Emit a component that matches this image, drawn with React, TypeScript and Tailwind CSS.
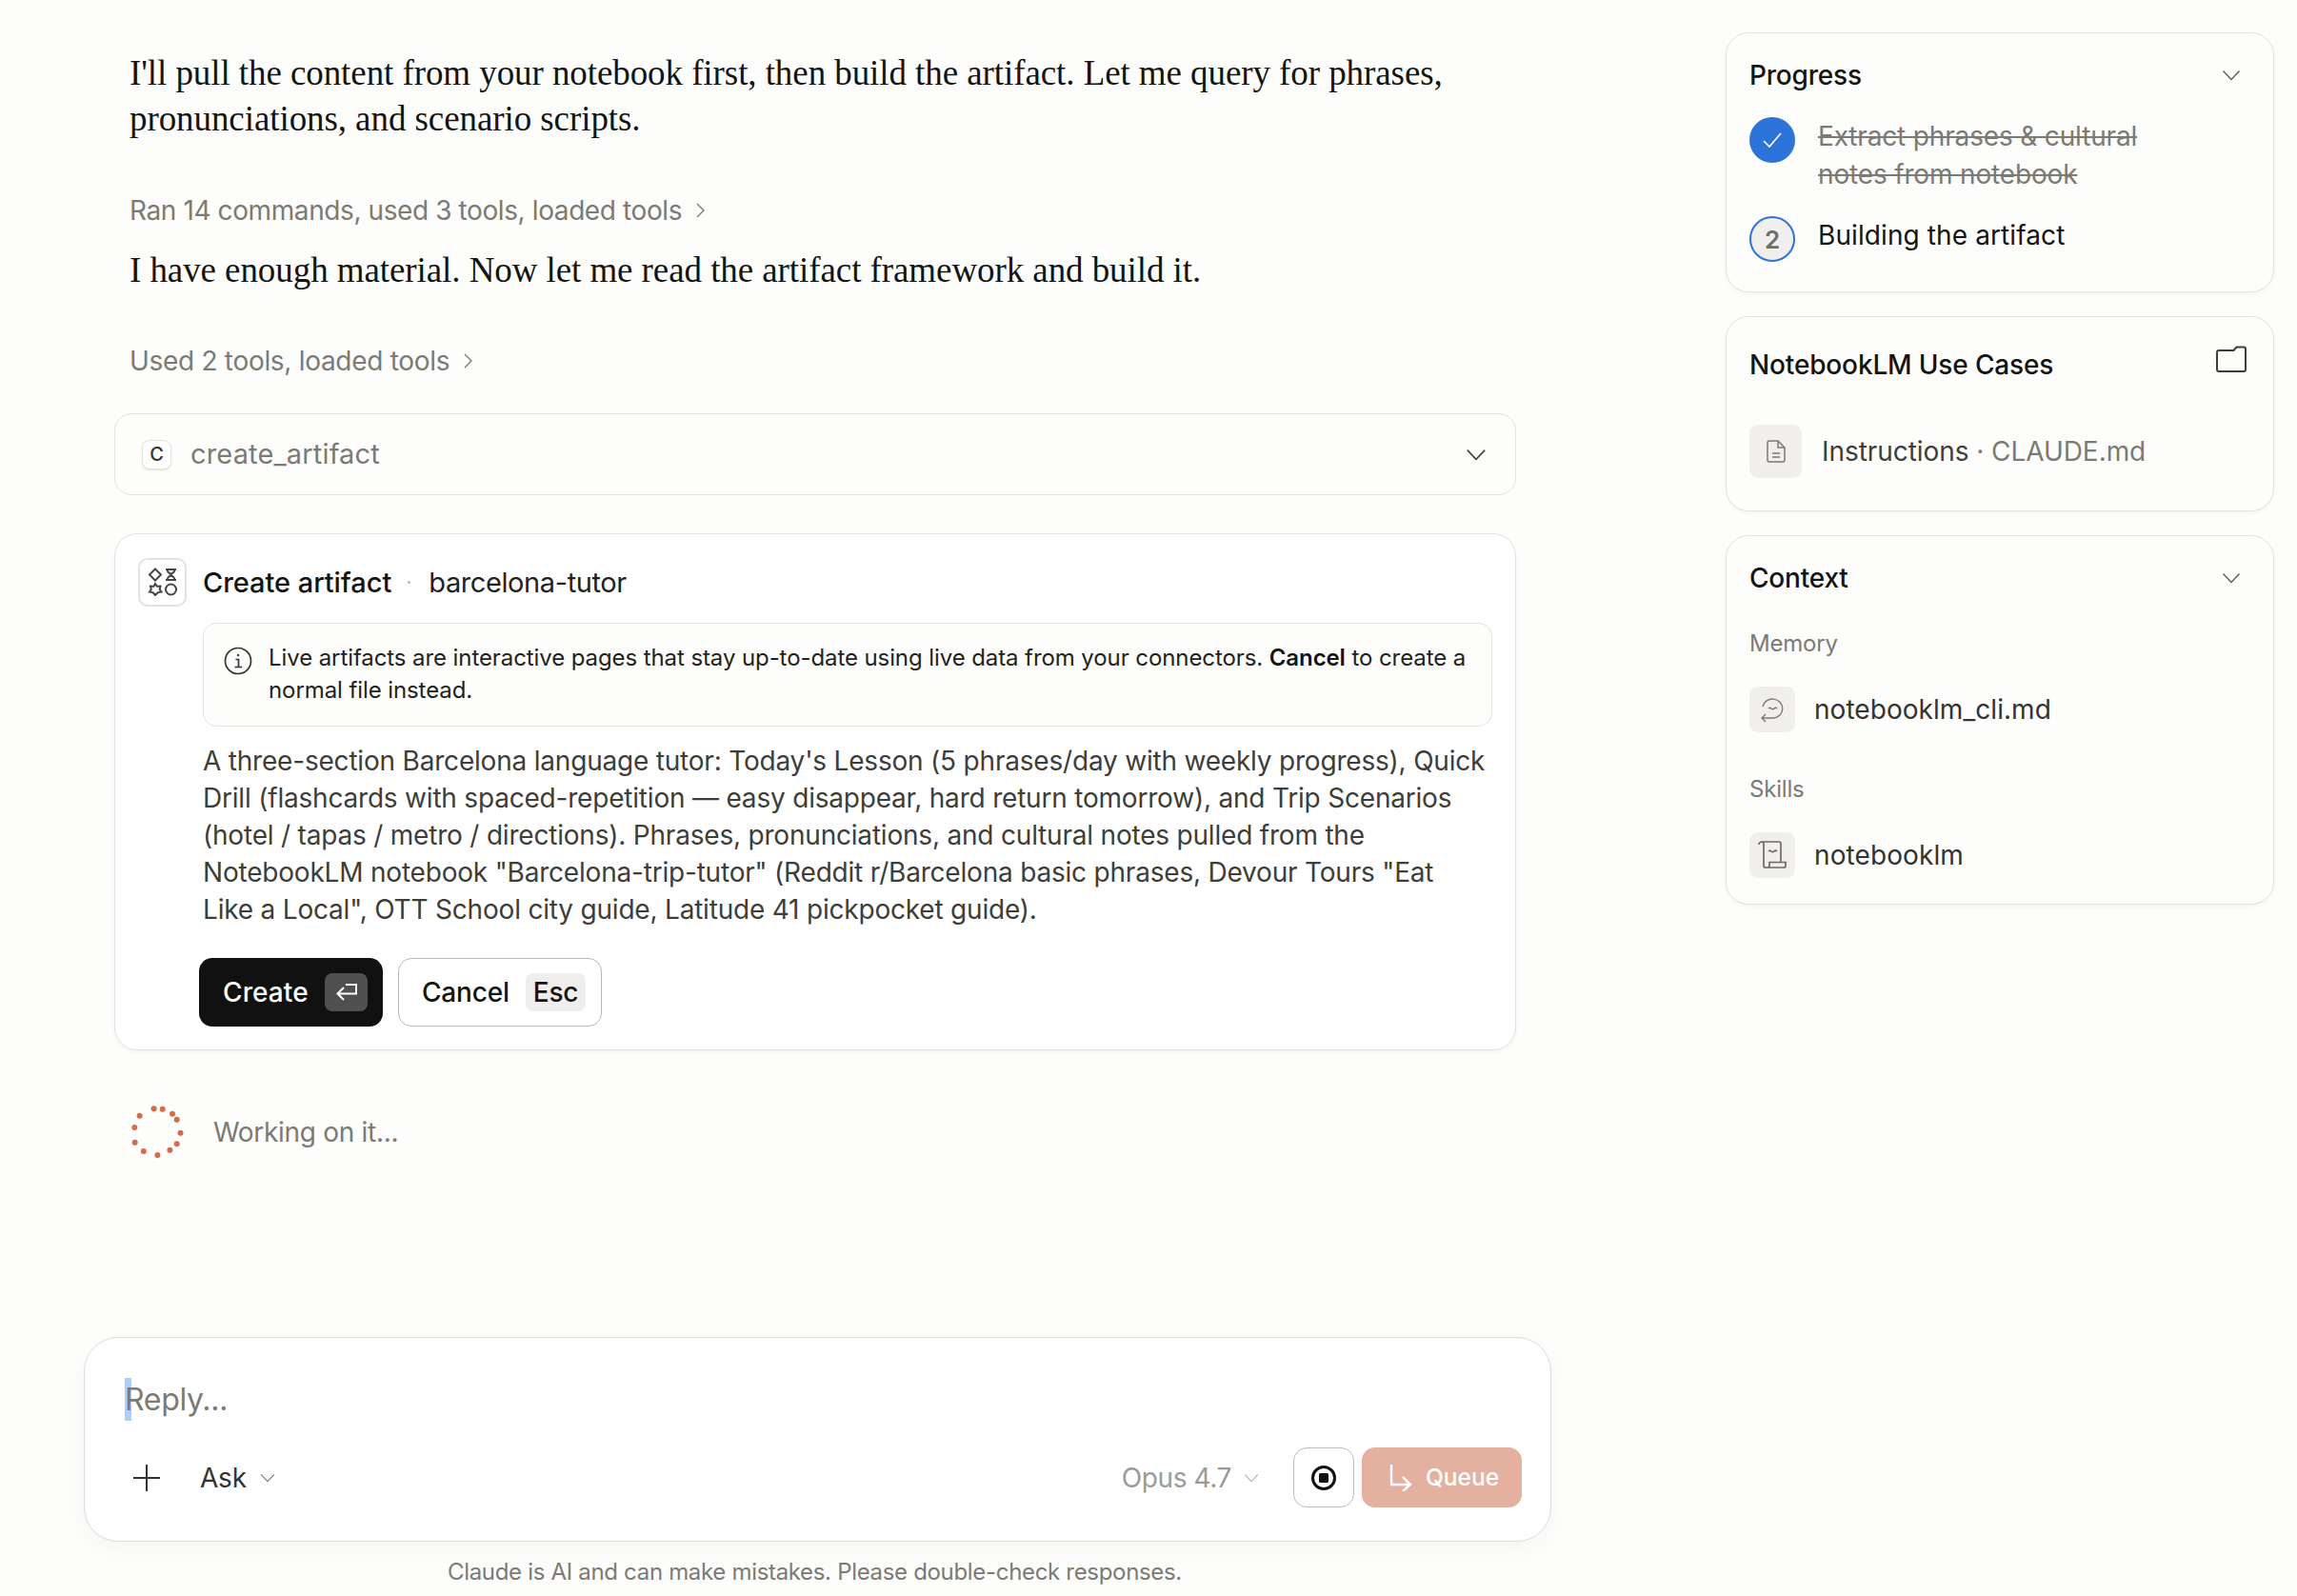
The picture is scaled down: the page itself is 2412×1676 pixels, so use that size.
import React from "react";

const sans = "[font-family:Inter,'Liberation_Sans',sans-serif]";

function Chevron({ className = "" }: { className?: string }) {
  return (
    <svg viewBox="0 0 20 12" fill="none" stroke="currentColor" strokeWidth="1.4" className={className}>
      <path d="M1.5 1.5 10 10.5l8.5-9" />
    </svg>
  );
}

function Spinner() {
  const dots = [
    [-3.4, -24.7], [5.7, -24.3], [16, -19.3], [20.7, -13.3], [24.5, 0.7], [20.7, 12.3],
    [13.4, 18.7], [0.4, 24], [-14.2, 20], [-23.3, 10.7], [-23.7, -5], [-18.4, -17.3],
  ];
  return (
    <svg width="60" height="60" viewBox="-30 -30 60 60" className="shrink-0">
      {dots.map(([x, y], i) => (
        <circle key={i} cx={x} cy={y} r="3" fill="#d9694a" />
      ))}
    </svg>
  );
}

function Tile({ children, size }: { children: React.ReactNode; size: string }) {
  return <div className={`${size} rounded-[9px] bg-[#f0efee] flex items-center justify-center shrink-0`}>{children}</div>;
}

function Card({ children, className = "" }: { children: React.ReactNode; className?: string }) {
  return (
    <div className={`rounded-[24px] border border-[#e3e2df] bg-[#fdfdfb] shadow-[0_2px_4px_rgba(0,0,0,0.04)] ${className}`}>
      {children}
    </div>
  );
}

export default function App() {
  return (
    <div className={`${sans} w-[2412px] h-[1676px] bg-[#fdfdfb] overflow-hidden flex text-[#141413]`}>
      <div className="w-[1812px] shrink-0 flex flex-col">
        <div className="pl-[136px] pt-[53px] text-[37px] leading-[48px] tracking-[-0.08px] text-[#141413] [font-family:'Liberation_Serif',serif] whitespace-nowrap">
          I'll pull the content from your notebook first, then build the artifact. Let me query for phrases,
          <br />
          pronunciations, and scenario scripts.
        </div>

        <div className="pl-[136px] mt-[52px] flex items-center gap-[14px] text-[28px] leading-[40px] text-[#7b7a75] tracking-[-0.4px]">
          Ran 14 commands, used 3 tools, loaded tools
          <svg width="12" height="18" viewBox="0 0 12 18" fill="none" stroke="#7b7a75" strokeWidth="1.4"><path d="M2 2l7 7-7 7" /></svg>
        </div>

        <div className="pl-[136px] mt-[19px] text-[37px] leading-[48px] tracking-[-0.08px] [font-family:'Liberation_Serif',serif] whitespace-nowrap">
          I have enough material. Now let me read the artifact framework and build it.
        </div>

        <div className="pl-[136px] mt-[51px] flex items-center gap-[14px] text-[28px] leading-[40px] text-[#7b7a75] tracking-[-0.3px]">
          Used 2 tools, loaded tools
          <svg width="12" height="18" viewBox="0 0 12 18" fill="none" stroke="#7b7a75" strokeWidth="1.4"><path d="M2 2l7 7-7 7" /></svg>
        </div>

        <div className="ml-[120px] mt-[35px] w-[1472px] h-[86px] rounded-[18px] border border-[#e3e2df] flex items-center pl-[28px] pr-[30px]">
          <div className="w-[31px] h-[31px] rounded-[8px] border border-[#e3e2df] bg-white shadow-[0_1px_2px_rgba(0,0,0,0.1)] flex items-center justify-center text-[20px] font-medium text-[#333]">C</div>
          <div className="ml-[20px] text-[29px] tracking-[0.15px] text-[#7b7a75]">create_artifact</div>
          <Chevron className="ml-auto w-[22px] h-[13px] text-[#3d3d3a]" />
        </div>

        <div className="ml-[120px] mt-[40px] w-[1472px] h-[543px] rounded-[24px] border border-[#e3e2df] bg-white shadow-[0_2px_4px_rgba(0,0,0,0.04)] pt-[24px] pl-[25px] pr-[24px]">
          <div className="flex items-center h-[52px]">
            <div className="-ml-[1px] w-[51px] h-[51px] rounded-[10px] border-2 border-[#e3e2df] flex items-center justify-center shrink-0">
              <svg width="32" height="30" viewBox="0 0 32 30" fill="none" stroke="#444" strokeWidth="2">
                <path d="M8 1.5l6 6-6 6-6-6z" />
                <path d="M19 2h11M19 13h11M20.5 2c0 4 3.5 3.500 4 5.500.5-2 4-1.500 4-5.500M20.500 13c0-4 3.500-3.500 4-5.500.5 2 4 1.500 4 5.500" />
                <path d="M8 17l2 2.800 3.500-.2-.8 3.400 1.800 2.500-3.500.6L8 29l-2.500-2.900-3.500-.6 1.800-2.500-.8-3.400 3.500.2z" />
                <circle cx="24.500" cy="23" r="5.500" />
              </svg>
            </div>
            <div className="ml-[17px] mt-[2px] text-[29px] font-medium tracking-[-0.05px]">Create artifact</div>
            <div className="ml-[17px] w-[3px] h-[3px] rounded-full bg-[#b5b4b0]" />
            <div className="ml-[19px] mt-[2px] text-[29px] tracking-[-0.4px] text-[#222]">barcelona-tutor</div>
          </div>

          <div className="ml-[67px] mt-[17px] w-[1354px] h-[109px] rounded-[14px] border border-[#e3e2df] bg-[#fdfdfb] flex pl-[21px] pt-[19px] text-[24px] leading-[34px] tracking-[-0.09px] text-[#222]">
            <svg width="30" height="30" viewBox="0 0 30 30" fill="none" stroke="#333" strokeWidth="1.700" className="shrink-0 mt-[5px]">
              <circle cx="15" cy="15" r="13.500" />
              <path d="M12.500 13.500h3v8M11.500 21.500h7.500" />
              <circle cx="15" cy="9" r="1.200" fill="#333" stroke="none" />
            </svg>
            <div className="ml-[17px] whitespace-nowrap">
              Live artifacts are interactive pages that stay up-to-date using live data from your connectors. <b className="font-semibold text-[#141413]">Cancel</b> to create a
              <br />
              normal file instead.
            </div>
          </div>

          <div className="ml-[67px] mt-[17px] text-[28px] leading-[39px] tracking-[-0.2px] text-[#3d3d3a] whitespace-nowrap">
            A three-section Barcelona language tutor: Today's Lesson (5 phrases/day with weekly progress), Quick
            <br />
            Drill (flashcards with spaced-repetition — easy disappear, hard return tomorrow), and Trip Scenarios
            <br />
            (hotel / tapas / metro / directions). Phrases, pronunciations, and cultural notes pulled from the
            <br />
            NotebookLM notebook "Barcelona-trip-tutor" (Reddit r/Barcelona basic phrases, Devour Tours "Eat
            <br />
            Like a Local", OTT School city guide, Latitude 41 pickpocket guide).
          </div>

          <div className="ml-[63px] mt-[31px] flex gap-[16px]">
            <div className="w-[193px] h-[72px] rounded-[14px] bg-[#111111] text-white flex items-center pl-[25px] text-[28px] font-medium tracking-[0.1px]">
              Create
              <div className="ml-auto mr-[16px] w-[45px] h-[40px] rounded-[8px] bg-[#505050] flex items-center justify-center">
                <svg width="24" height="20" viewBox="0 0 24 20" fill="none" stroke="#fff" strokeWidth="2"><path d="M11 2h11v9.500H3M9 5l-6.500 6.500L9 18" /></svg>
              </div>
            </div>
            <div className="w-[214px] h-[72px] rounded-[14px] border border-[#b9b8b4] bg-white flex items-center pl-[24px] text-[28px] font-medium tracking-[-0.2px] text-[#141413]">
              Cancel
              <div className="ml-auto mr-[16px] w-[63px] h-[40px] rounded-[8px] bg-[#efeeec] flex items-center justify-center">Esc</div>
            </div>
          </div>
        </div>

        <div className="ml-[135px] mt-[56px] flex items-center h-[60px]">
          <Spinner />
          <div className="ml-[29px] text-[28px] tracking-[-0.3px] text-[#7b7a75]">Working on it...</div>
        </div>

        <div className="mt-[185px] ml-[88px] w-[1541px] h-[215px] rounded-[36px] border border-[#dddcd9] bg-white shadow-[0_8px_24px_rgba(0,0,0,0.035)] relative pl-[42px] pr-[30px] pt-[42px]">
          <div className="relative h-[45px] flex items-center text-[32px] text-[#7b7a75] tracking-[-0.3px]">
            <div className="absolute left-0 top-0 w-[7px] h-[45px] bg-[#a8d0ff]" />
            <span className="relative">Reply...</span>
          </div>
          <div className="mt-[28px] h-[63px] flex items-center">
            <svg width="28" height="28" viewBox="0 0 28 28" stroke="#333" strokeWidth="2" className="ml-[9px]"><path d="M14 0v28M0 14h28" /></svg>
            <div className="ml-[42px] text-[28px] text-[#333] tracking-[-0.2px]">Ask</div>
            <Chevron className="ml-[14px] w-[16px] h-[10px] text-[#7b7a75]" />
            <div className="ml-auto text-[28px] text-[#9b9a96] tracking-[-0.4px]">Opus 4.7</div>
            <Chevron className="ml-[13px] w-[16px] h-[10px] text-[#b5b4b0]" />
            <div className="ml-[36px] w-[64px] h-[63px] rounded-[14px] border border-[#bdbcb8] flex items-center justify-center">
              <svg width="28" height="28" viewBox="0 0 28 28"><circle cx="14" cy="14" r="11.500" fill="none" stroke="#111" strokeWidth="3" /><rect x="9" y="9" width="10" height="10" rx="1.500" fill="#111" /></svg>
            </div>
            <div className="ml-[8px] w-[168px] h-[63px] rounded-[14px] bg-[#e4b1a1] text-white flex items-center pl-[29px] text-[24.5px] font-medium">
              <svg width="24" height="28" viewBox="0 0 24 28" fill="none" stroke="#fff" strokeWidth="2.400"><path d="M2 0v21h20M14 13l8 8-8 7" /></svg>
              <span className="ml-[14px]">Queue</span>
            </div>
          </div>
        </div>

        <div className="mt-[18px] pl-[470px] text-[24px] leading-[28px] tracking-[-0.32px] text-[#7b7a75] whitespace-nowrap">
          Claude is AI and can make mistakes. Please double-check responses.
        </div>
      </div>

      <div className="w-[576px] shrink-0 pt-[34px] flex flex-col">
        <Card className="h-[273px] px-[24px] pt-[24px]">
          <div className="flex items-center justify-between h-[40px] pr-[10px]">
            <div className="text-[28px] font-medium tracking-[-0.2px]">Progress</div>
            <Chevron className="w-[20px] h-[12px] text-[#5f5e5a]" />
          </div>
          <div className="flex mt-[24px]">
            <div className="w-[48px] h-[48px] rounded-full bg-[#2c74d9] flex items-center justify-center shrink-0">
              <svg width="22" height="18" viewBox="0 0 22 18" fill="none" stroke="#fff" strokeWidth="1.600"><path d="M2 10l6 6L20 2" /></svg>
            </div>
            <div className="ml-[24px] text-[28px] leading-[40px] tracking-[-0.16px] text-[#7b7a75] line-through whitespace-nowrap">
              Extract phrases &amp; cultural
              <br />
              notes from notebook
            </div>
          </div>
          <div className="flex mt-[24px]">
            <div className="w-[48px] h-[48px] rounded-full bg-[#f0efee] border-2 border-[#2c74d9] flex items-center justify-center shrink-0 text-[26px] font-semibold text-[#6f6e69]">2</div>
            <div className="ml-[24px] text-[28px] leading-[40px] tracking-[0.1px]">Building the artifact</div>
          </div>
        </Card>

        <Card className="mt-[25px] h-[205px] px-[24px] pt-[30px]">
          <div className="flex justify-between h-[40px] pr-[4px]">
            <div className="text-[28px] leading-[40px] font-medium tracking-[-0.15px]">NotebookLM Use Cases</div>
            <svg width="32" height="28" viewBox="0 0 32 28" fill="none" stroke="#3d3d3a" strokeWidth="2"><path d="M3 5h15.500l3-3.500H29a2 2 0 0 1 2 2V25a2 2 0 0 1-2 2H3a2 2 0 0 1-2-2V7a2 2 0 0 1 2-2z" /></svg>
          </div>
          <div className="flex items-center mt-[43px]">
            <Tile size="w-[55px] h-[56px]">
              <svg width="20" height="24" viewBox="0 0 20 24" fill="none" stroke="#7b7a75" strokeWidth="1.500"><path d="M1 3a2 2 0 0 1 2-2h9l7 7v13a2 2 0 0 1-2 2H3a2 2 0 0 1-2-2zM12 1v7h7M6 14h8M6 18h8" /></svg>
            </Tile>
            <div className="ml-[21px] text-[28px] tracking-[-0.06px] text-[#3d3d3a]">
              Instructions <span className="text-[#7b7a75]">· CLAUDE.md</span>
            </div>
          </div>
        </Card>

        <Card className="mt-[25px] h-[388px] px-[24px] pt-[24px]">
          <div className="flex items-center justify-between h-[40px] pr-[10px]">
            <div className="text-[28px] font-medium tracking-[-0.2px]">Context</div>
            <Chevron className="w-[20px] h-[12px] text-[#5f5e5a]" />
          </div>
          <div className="mt-[32px] text-[24px] leading-[34px] tracking-[-0.2px] text-[#7b7a75]">Memory</div>
          <div className="flex items-center mt-[28px]">
            <Tile size="w-[48px] h-[48px]">
              <svg width="28" height="28" viewBox="0 0 28 28" fill="none" stroke="#7b7a75" strokeWidth="1.400"><path d="M4 11A10.500 10 0 1 1 15 23H3M7 19l-4 4 4 4M10 13q1.500-1.500 3 0t3 0 3 0" /></svg>
            </Tile>
            <div className="ml-[20px] text-[28px] tracking-[0.05px] text-[#333]">notebooklm_cli.md</div>
          </div>
          <div className="mt-[43px] text-[24px] leading-[34px] tracking-[-0.2px] text-[#7b7a75]">Skills</div>
          <div className="flex items-center mt-[28px]">
            <Tile size="w-[48px] h-[48px]">
              <svg width="34" height="34" viewBox="0 0 34 34" fill="none" stroke="#6a6965" strokeWidth="1.700"><path d="M3 6a3 3 0 0 1 3-3h18a2 2 0 0 1 2 2v19M6 3a2.500 2.500 0 0 1 2 2.500V28a2 2 0 0 0 2 2h19a2 2 0 0 0 2-2v-3.500H14V28a2 2 0 0 1-2 2M13 13q1.500-1.500 3 0t3 0 3 0" /></svg>
            </Tile>
            <div className="ml-[20px] text-[28px] tracking-[0.1px] text-[#333]">notebooklm</div>
          </div>
        </Card>
      </div>
    </div>
  );
}
